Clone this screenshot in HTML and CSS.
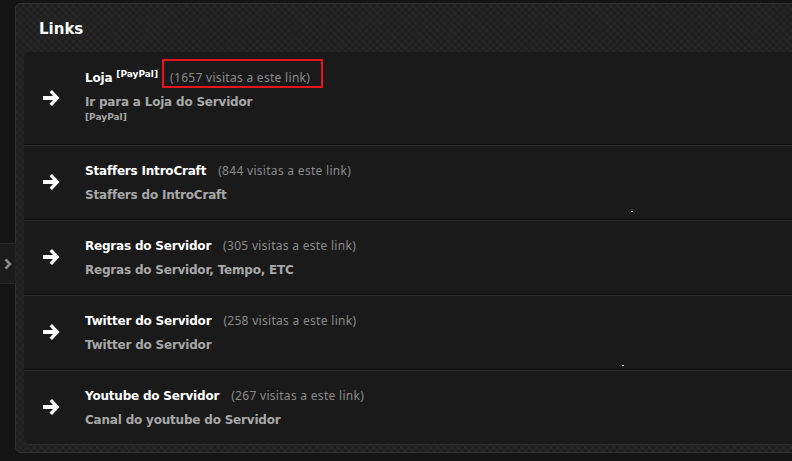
FILE: index.html
```html
<!DOCTYPE html>
<html lang="pt">
<head>
<meta charset="utf-8">
<title>Links</title>
<link rel="stylesheet" href="styles.css">
</head>
<body>
<div class="page">
  <div class="side-tab">
    <svg width="8" height="12" viewBox="0 0 8 12"><path d="M1.5 1.5 L6 6 L1.5 10.5" fill="none" stroke="#8a8a8a" stroke-width="2.6"/></svg>
  </div>
  <section class="panel">
    <h2 class="panel-title">Links</h2>
    <ul class="link-list">
      <li class="link-row first">
        <span class="arrow"><svg width="20" height="18" viewBox="0 0 20 18"><path d="M1 7 H11 L7.5 3.2 L10 1 L17.5 9 L10 17 L7.5 14.8 L11 11 H1 Z" fill="#fff"/></svg></span>
        <div class="link-body">
          <div class="link-head"><a class="link-title">Loja</a><sup class="tag">[PayPal]</sup><span class="visits marked">(1657 visitas a este link)</span></div>
          <div class="link-desc">Ir para a Loja do Servidor</div>
          <div class="link-note">[PayPal]</div>
        </div>
      </li>
      <li class="link-row">
        <span class="arrow"><svg width="20" height="18" viewBox="0 0 20 18"><path d="M1 7 H11 L7.5 3.2 L10 1 L17.5 9 L10 17 L7.5 14.8 L11 11 H1 Z" fill="#fff"/></svg></span>
        <div class="link-body">
          <div class="link-head"><a class="link-title">Staffers IntroCraft</a><span class="visits">(844 visitas a este link)</span></div>
          <div class="link-desc">Staffers do IntroCraft</div>
        </div>
        <span class="dot dot-a"></span>
      </li>
      <li class="link-row">
        <span class="arrow"><svg width="20" height="18" viewBox="0 0 20 18"><path d="M1 7 H11 L7.5 3.2 L10 1 L17.5 9 L10 17 L7.5 14.8 L11 11 H1 Z" fill="#fff"/></svg></span>
        <div class="link-body">
          <div class="link-head"><a class="link-title">Regras do Servidor</a><span class="visits">(305 visitas a este link)</span></div>
          <div class="link-desc">Regras do Servidor, Tempo, ETC</div>
        </div>
      </li>
      <li class="link-row">
        <span class="arrow"><svg width="20" height="18" viewBox="0 0 20 18"><path d="M1 7 H11 L7.5 3.2 L10 1 L17.5 9 L10 17 L7.5 14.8 L11 11 H1 Z" fill="#fff"/></svg></span>
        <div class="link-body">
          <div class="link-head"><a class="link-title">Twitter do Servidor</a><span class="visits">(258 visitas a este link)</span></div>
          <div class="link-desc">Twitter do Servidor</div>
        </div>
        <span class="dot dot-b"></span>
      </li>
      <li class="link-row">
        <span class="arrow"><svg width="20" height="18" viewBox="0 0 20 18"><path d="M1 7 H11 L7.5 3.2 L10 1 L17.5 9 L10 17 L7.5 14.8 L11 11 H1 Z" fill="#fff"/></svg></span>
        <div class="link-body">
          <div class="link-head"><a class="link-title">Youtube do Servidor</a><span class="visits">(267 visitas a este link)</span></div>
          <div class="link-desc">Canal do youtube do Servidor</div>
        </div>
      </li>
    </ul>
  </section>
</div>
</body>
</html>
```

FILE: styles.css
```css
html, body {
  margin: 0;
  padding: 0;
  background: #141414;
  overflow: hidden;
}
body {
  font-family: "DejaVu Sans", Verdana, sans-serif;
  color: #ddd;
}
.page {
  position: relative;
  padding: 3px 0 0 15px;
  height: 458px;
}
.side-tab {
  position: absolute;
  left: 0;
  top: 243px;
  width: 15px;
  height: 39px;
  background: #1c1c1c;
  border: 1px solid #262626;
  border-left: none;
  display: flex;
  align-items: center;
  justify-content: center;
}
.panel {
  width: 820px;
  box-sizing: border-box;
  background-color: #222;
  background-image:
    repeating-linear-gradient(45deg, rgba(255,255,255,0.025) 0 2px, rgba(0,0,0,0) 2px 5px),
    repeating-linear-gradient(-45deg, rgba(0,0,0,0.12) 0 2px, rgba(0,0,0,0) 2px 5px);
  border: 1px solid #333;
  border-radius: 6px;
  padding: 0 8px 7px 8px;
}
.panel-title {
  margin: 0;
  height: 48px;
  box-sizing: border-box;
  padding: 16px 0 0 15px;
  font-size: 15px;
  font-weight: bold;
  color: #fff;
  line-height: 18px;
}
.link-list {
  list-style: none;
  margin: 0;
  padding: 0;
  background: #1a1a1a;
  border-radius: 5px;
}
.link-row {
  position: relative;
  display: flex;
  align-items: center;
  height: 75px;
  box-sizing: border-box;
  border-top: 1px solid #2b2b2b;
  border-bottom: 1px solid #0e0e0e;
}
.link-row.first {
  height: 93px;
  border-top: none;
}
.link-row:last-child {
  border-bottom: 1px solid #2e2e2e;
  border-radius: 0 0 5px 5px;
}
.arrow {
  width: 61px;
  flex: none;
  display: flex;
  justify-content: flex-start;
  padding: 0 0 2px 18px;
  box-sizing: border-box;
}
.link-row.first .arrow {
  padding-bottom: 0;
}
.link-body {
  align-self: flex-start;
  padding-top: 16px;
  display: flex;
  flex-direction: column;
}
.link-row.first .link-body {
  padding-top: 17px;
}
.link-head {
  display: flex;
  align-items: baseline;
  height: 20px;
}
.link-title {
  font-size: 12px;
  font-weight: bold;
  color: #fff;
  letter-spacing: -0.2px;
}
.tag {
  font-size: 9px;
  font-weight: bold;
  color: #fff;
  margin-left: 4px;
  position: relative;
  top: -5px;
  vertical-align: baseline;
}
.visits {
  position: relative;
  margin-left: 12px;
  font-family: "Noto Sans", "Open Sans", sans-serif;
  font-size: 12px;
  letter-spacing: 0.3px;
  color: #8a8a8a;
}
.visits.marked::after {
  content: "";
  position: absolute;
  left: -8px;
  right: -13px;
  top: -10px;
  bottom: -2px;
  border: 2px solid #e8141c;
}
.link-desc {
  margin-top: 6px;
  font-size: 12px;
  font-weight: bold;
  color: #a8a8a8;
  letter-spacing: -0.2px;
}
.link-note {
  margin-top: 3px;
  font-size: 9px;
  font-weight: bold;
  color: #a8a8a8;
}
.dot {
  position: absolute;
  width: 2px;
  height: 1px;
  background: #fff;
}
.dot-a { left: 607px; top: 65px; }
.dot-b { left: 598px; top: 69px; }
```
